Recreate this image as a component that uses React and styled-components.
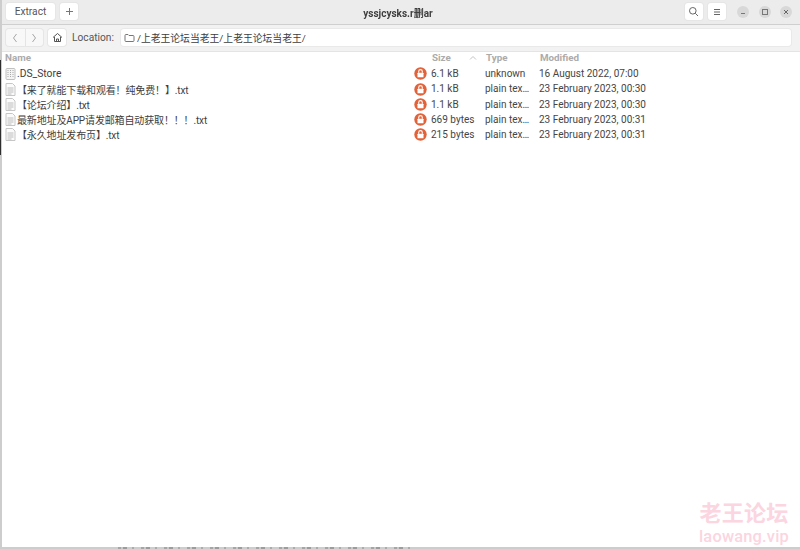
import React from "react";
import styled, { createGlobalStyle } from "styled-components";

const Global = createGlobalStyle`
  html, body { margin: 0; padding: 0; background: #bdbdbd; }
  #root { width: 800px; height: 549px; overflow: hidden; }
  * { box-sizing: border-box; }
`;
const FONT = `Roboto, "Noto Sans CJK SC", sans-serif`;

const Desktop = styled.div`
  width: 800px; height: 549px; background: #cdcdcd; display: flex; flex-direction: column;
  padding-left: 2px; font-family: ${FONT}; color: #3d3d3d; font-size: 10px; filter: blur(0.35px); position: relative;
  &::before { content: ""; position: absolute; left: 0; top: 60px; width: 1px; height: 95px; background: #2e2e2e; }
`;
const Window = styled.div`
  flex: 1; display: flex; flex-direction: column; background: #fff; position: relative; min-height: 0;
`;
const BottomStrip = styled.div`
  flex: none; height: 2px; padding-left: 116px;
`;
const ClippedText = styled.div`
  width: 295px; height: 2px;
  background: repeating-linear-gradient(90deg, #a6a6a6 0 3px, #c8c8c8 3px 5px, #9c9c9c 5px 9px, #cdcdcd 9px 14px, #ababab 14px 16px, #cdcdcd 16px 23px);
`;
const HeaderBar = styled.header`
  height: 25px; flex: none; display: flex; align-items: center; padding: 0 8px 1px 4px;
  background: #ececec; border-bottom: 1px solid #cfcfcf; position: relative;
`;
const Title = styled.div`
  position: absolute; left: -6px; right: 0; top: 5px; text-align: center; font-size: 10px; font-weight: 700; color: #3f3f3f;
`;
const Btn = styled.button`
  height: 17px; min-width: ${p => p.$w || 18}px; padding: 0; border: 0; border-radius: 3px; background: #fff;
  box-shadow: 0 0 0 1px #e6e6e6; margin-right: ${p => p.$mr || 0}px; color: #555; font: 10.2px ${FONT};
  display: flex; align-items: center; justify-content: center;
`;
const Spacer = styled.div` flex: 1; `;
const WinBtn = styled.div`
  width: 12px; height: 12px; border-radius: 50%; background: #d8d8d8; margin-left: 9.5px;
  display: flex; align-items: center; justify-content: center;
`;
const ToolBar = styled.div`
  height: 27px; flex: none; display: flex; align-items: center; padding: 0 9px 1px 4px; background: #f2f2f2; border-bottom: 1px solid #e4e4e4;
`;
const NavGroup = styled.div`
  display: flex; height: 17px; border-radius: 3px; background: #f8f8f8; box-shadow: 0 0 0 1px #e6e6e6; margin-right: 5px; overflow: hidden;
`;
const NavBtn = styled.div`
  width: 18.5px; display: flex; align-items: center; justify-content: center;
  & + & { border-left: 1px solid #e4e4e4; }
`;
const LocLabel = styled.span` margin: 0 7px 0 6px; color: #555; font-size: 10.2px; `;
const LocField = styled.div`
  flex: 1; height: 17px; background: #fff; border-radius: 3px; box-shadow: 0 0 0 1px #e9e9e9; display: flex; align-items: center; padding-left: 3px; gap: 2px; color: #3d3d3d; font-size: 9.8px;
`;
const Row = styled.div`
  display: grid; grid-template-columns: 411px 17px 54px 54px 1fr; grid-template-rows: ${p => p.$h || 15}px; height: ${p => p.$h || 15}px; align-items: center; padding-left: 1px; white-space: nowrap; line-height: 12px;
`;
const HeadRow = styled(Row)`
  height: 14px; grid-template-rows: 14px; color: #ababab; font-weight: 700; font-size: 9.8px;
`;
const HeadCell = styled.span`
  padding-left: ${p => p.$pl || 0}px; padding-right: ${p => p.$pr || 0}px; padding-bottom: 3px; display: flex; justify-content: space-between; align-items: center;
`;
const NameCell = styled.div` display: flex; align-items: center; min-width: 0; `;
const IconSlot = styled.div` width: 14px; flex: none; display: flex; justify-content: center; `;
const Name = styled.span`
  font-size: ${p => (p.$cjk ? 10 : 10.3)}px;
  letter-spacing: ${p => (p.$cjk ? "-0.14px" : "0")}; padding-top: ${p => (p.$cjk ? 3 : 0)}px;
`;
const Cell = styled.span` color: #454545; `;
const Rows = styled.div` display: flex; flex-direction: column; `;
const Watermark = styled.div`
  position: absolute; right: 10px; bottom: 2px; width: 92px; text-align: center; color: #fbd5df; font-weight: 700; line-height: 1;
`;
const WmTop = styled.div` font-size: 22px; letter-spacing: 0.3px; margin-bottom: 4px; `;
const WmBottom = styled.div` font-size: 16.4px; font-weight: 500; letter-spacing: 0.2px; `;

const Chevron = ({ dir }) => (
  <svg width="8" height="10" viewBox="0 0 8 10" fill="none" stroke="#a5a5a5" strokeWidth="1">
    <path d={dir === "left" ? "M5.5 1 L2.5 5 L5.5 9" : "M2.5 1 L5.5 5 L2.5 9"} />
  </svg>
);
const Home = () => (
  <svg width="11" height="11" viewBox="0 0 11 11" fill="none" stroke="#555" strokeWidth="1">
    <path d="M1 5.5 L5.5 1.5 L10 5.5 M2.5 5 V9.5 H8.5 V5 M4.5 9.5 V7 H6.5 V9.5" />
  </svg>
);
const Folder = () => (
  <svg width="11" height="10" viewBox="0 0 11 10" fill="none" stroke="#777" strokeWidth="1">
    <path d="M1 2.5 Q1 1.5 2 1.5 H4 L5 2.5 H9 Q10 2.5 10 3.5 V7.5 Q10 8.5 9 8.5 H2 Q1 8.5 1 7.5 Z" />
  </svg>
);
const Search = () => (
  <svg width="11" height="11" viewBox="0 0 11 11" fill="none" stroke="#666" strokeWidth="1">
    <circle cx="4.8" cy="4.8" r="3.3" /><path d="M7.3 7.3 L10 10" />
  </svg>
);
const Menu = () => (
  <svg width="10" height="8" viewBox="0 0 10 8" stroke="#666" strokeWidth="1">
    <path d="M2 1.5 H8 M2 4 H8 M2 6.5 H8" />
  </svg>
);
const Min = () => <svg width="8" height="8" viewBox="0 0 8 8" stroke="#777"><path d="M2 5.5 H6" /></svg>;
const Max = () => <svg width="8" height="8" viewBox="0 0 8 8" fill="none" stroke="#777"><rect x="1.5" y="1.5" width="5" height="5" /></svg>;
const Close = () => <svg width="8" height="8" viewBox="0 0 8 8" stroke="#666"><path d="M2 2 L6 6 M6 2 L2 6" /></svg>;
const Plus = () => <svg width="9" height="9" viewBox="0 0 9 9" stroke="#777"><path d="M4.5 1 V8 M1 4.5 H8" /></svg>;
const SortUp = () => <svg width="8" height="6" viewBox="0 0 8 6" fill="none" stroke="#c4c4c4"><path d="M1 4.5 L4 1.5 L7 4.5" /></svg>;

const TextFile = () => (
  <svg width="11" height="13" viewBox="0 0 11 13" fill="#fbfbfb" stroke="#c6c6c6" strokeWidth="1">
    <path d="M1 0.5 H7.5 L10 3 V12.5 H1 Z" />
    <path d="M2.5 5 H8.5 M2.5 7 H8.5 M2.5 9 H8.5 M2.5 11 H6.5" stroke="#bcbcbc" />
  </svg>
);
const BinFile = () => (
  <svg width="11" height="12" viewBox="0 0 11 12" fill="#f4f4f4" stroke="#c0c0c0" strokeWidth="1">
    <rect x="1" y="0.5" width="9" height="11" rx="1" />
    <path d="M3 2 V10 M5.5 2 V10 M8 2 V10" stroke="#a8a8a8" strokeDasharray="1 1" />
  </svg>
);
const Lock = () => (
  <svg width="13" height="13" viewBox="0 0 13 13">
    <circle cx="6.5" cy="6.5" r="6.2" fill="#e2633a" />
    <rect x="3.5" y="5.7" width="6" height="4.6" rx="0.6" fill="#fff" />
    <path d="M4.7 5.8 V4.4 a1.8 1.8 0 0 1 3.6 0 V5.8" fill="none" stroke="#fff" strokeWidth="1.1" />
  </svg>
);

const files = [
  { name: ".DS_Store", bin: true, size: "6.1 kB", type: "unknown", date: "16 August 2022, 07:00", h: 15.5 },
  { name: "【来了就能下载和观看！纯免费！】.txt", cjk: true, size: "1.1 kB", type: "plain tex…", date: "23 February 2023, 00:30", h: 15.5 },
  { name: "【论坛介绍】.txt", cjk: true, size: "1.1 kB", type: "plain tex…", date: "23 February 2023, 00:30", h: 15 },
  { name: "最新地址及APP请发邮箱自动获取！！！.txt", cjk: true, size: "669 bytes", type: "plain tex…", date: "23 February 2023, 00:31", h: 15 },
  { name: "【永久地址发布页】.txt", cjk: true, size: "215 bytes", type: "plain tex…", date: "23 February 2023, 00:31", h: 15 },
];

export default function App() {
  return (
    <Desktop>
      <Global />
      <Window>
        <HeaderBar>
          <Btn $w={49} $mr={5}>Extract</Btn>
          <Btn $w={18}><Plus /></Btn>
          <Title>yssjcysks.r删ar</Title>
          <Spacer />
          <Btn $w={18} $mr={5}><Search /></Btn>
          <Btn $w={18} $mr={2}><Menu /></Btn>
          <WinBtn><Min /></WinBtn>
          <WinBtn><Max /></WinBtn>
          <WinBtn><Close /></WinBtn>
        </HeaderBar>
        <ToolBar>
          <NavGroup>
            <NavBtn><Chevron dir="left" /></NavBtn>
            <NavBtn><Chevron dir="right" /></NavBtn>
          </NavGroup>
          <Btn $w={18}><Home /></Btn>
          <LocLabel>Location:</LocLabel>
          <LocField><Folder />/上老王论坛当老王/上老王论坛当老王/</LocField>
        </ToolBar>
        <HeadRow>
          <HeadCell $pl={2}>Name</HeadCell>
          <span />
          <HeadCell $pl={1} $pr={8}>Size<SortUp /></HeadCell>
          <HeadCell $pl={1}>Type</HeadCell>
          <HeadCell $pl={1}>Modified</HeadCell>
        </HeadRow>
        <Rows>
          {files.map(f => (
            <Row key={f.name} $h={f.h}>
              <NameCell>
                <IconSlot>{f.bin ? <BinFile /> : <TextFile />}</IconSlot>
                <Name $cjk={f.cjk}>{f.name}</Name>
              </NameCell>
              <Lock />
              <Cell>{f.size}</Cell>
              <Cell>{f.type}</Cell>
              <Cell>{f.date}</Cell>
            </Row>
          ))}
        </Rows>
        <Watermark>
          <WmTop>老王论坛</WmTop>
          <WmBottom>laowang.vip</WmBottom>
        </Watermark>
      </Window>
      <BottomStrip><ClippedText /></BottomStrip>
    </Desktop>
  );
}
